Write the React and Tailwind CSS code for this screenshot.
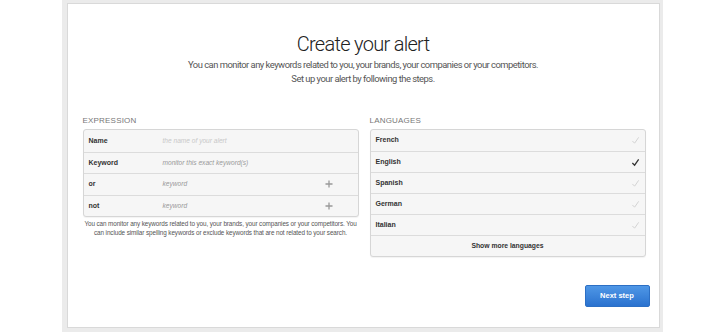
import React from 'react';

const expressionRows = [
    { label: 'Name', placeholder: 'the name of your alert', light: true },
    { label: 'Keyword', placeholder: 'monitor this exact keyword(s)' },
    { label: 'or', placeholder: 'keyword', plus: true },
    { label: 'not', placeholder: 'keyword', plus: true },
];

const languages = [
    { name: 'French', checked: false },
    { name: 'English', checked: true },
    { name: 'Spanish', checked: false },
    { name: 'German', checked: false },
    { name: 'Italian', checked: false },
];

const Check = ({ on }) => (
    <svg width="9" height="9" viewBox="0 0 10 10" className="shrink-0">
        <path d="M1.5 5.5 L4 8 L8.5 1.5" fill="none" stroke={on ? '#333' : '#cfcfcf'} strokeWidth={on ? 1.4 : 1} />
    </svg>
);

const Plus = () => (
    <svg width="8" height="8" viewBox="0 0 8 8" className="shrink-0">
        <path d="M4 0.5 V7.5 M0.5 4 H7.5" stroke="#999" strokeWidth="1.3" />
    </svg>
);

const App = () => {
    return (
        <div className="w-[724px] h-[332px] bg-white flex justify-center" style={{ fontFamily: '"Liberation Sans", Arial, sans-serif' }}>
            <div className="w-[601px] h-[332px] bg-[#ebebeb] pt-[3px] pb-[4px] pr-[3px] pl-[5px]">
                <div className="h-full bg-white border border-[#d9d9d9] flex flex-col px-[15px]">
                    {/* Header */}
                    <div className="text-center pt-[27px]">
                        <h1 className="text-[20px] leading-[26px] text-[#222] tracking-[-0.7px]" style={{ fontFamily: 'Roboto, "Liberation Sans", sans-serif', fontWeight: 300 }}>Create your alert</h1>
                        <p className="mt-[1px] text-[9.4px] leading-[14px] text-[#555] tracking-[-0.5px]" style={{ fontFamily: 'Roboto, "Liberation Sans", sans-serif' }}>
                            You can monitor any keywords related to you, your brands, your companies or your competitors.
                            <br />
                            Set up your alert by following the steps.
                        </p>
                    </div>

                    <div className="flex gap-[11px] mt-[30px]">
                        {/* Expression */}
                        <div className="w-[276px] shrink-0">
                            <div className="text-[8px] leading-[10px] text-[#777] uppercase tracking-[0.2px] mb-[3px]">Expression</div>
                            <div className="border border-[#d6d6d6] rounded-[3px] bg-[#f6f6f6] shadow-[0_1px_1px_rgba(0,0,0,0.05)]">
                                {expressionRows.map((row, i) => (
                                    <div key={row.label} className={`flex items-center h-[21.5px] pl-[5px] pr-[25px] ${i > 0 ? 'border-t border-[#dcdcdc]' : ''}`}>
                                        <span className="w-[74px] text-[7px] font-bold text-[#333]">{row.label}</span>
                                        <span className={`flex-1 text-[6.6px] italic ${row.light ? 'text-[#c8c8c8]' : 'text-[#999]'}`}>{row.placeholder}</span>
                                        {row.plus && <Plus />}
                                    </div>
                                ))}
                            </div>
                            <p className="mt-[2px] text-center text-[6.35px] leading-[9px] text-[#555] whitespace-nowrap tracking-[-0.1px]">
                                You can monitor any keywords related to you, your brands, your companies or your competitors. You
                                <br />
                                can include similar spelling keywords or exclude keywords that are not related to your search.
                            </p>
                        </div>

                        {/* Languages */}
                        <div className="w-[276px] shrink-0">
                            <div className="text-[8px] leading-[10px] text-[#777] uppercase tracking-[0.2px] mb-[3px]">Languages</div>
                            <div className="border border-[#d6d6d6] rounded-[3px] bg-[#f6f6f6] shadow-[0_1px_1px_rgba(0,0,0,0.05)]">
                                {languages.map((lang, i) => (
                                    <div key={lang.name} className={`flex items-center justify-between h-[21px] pl-[5px] pr-[5px] ${i > 0 ? 'border-t border-[#dcdcdc]' : ''}`}>
                                        <span className="text-[7px] font-bold text-[#333]">{lang.name}</span>
                                        <Check on={lang.checked} />
                                    </div>
                                ))}
                                <div className="flex items-center justify-center h-[21px] border-t border-[#dcdcdc]">
                                    <span className="text-[6.8px] font-bold text-[#333]">Show more languages</span>
                                </div>
                            </div>
                        </div>
                    </div>

                    <div className="flex justify-end mt-auto mb-[20px] mr-[-6px]">
                        <button className="w-[65px] h-[22px] rounded-[2px] bg-gradient-to-b from-[#4f97e6] to-[#2a72cf] border border-[#2c6fc4] text-white text-[7.5px] font-bold">
                            Next step
                        </button>
                    </div>
                </div>
            </div>
        </div>
    );
};

export default App;
